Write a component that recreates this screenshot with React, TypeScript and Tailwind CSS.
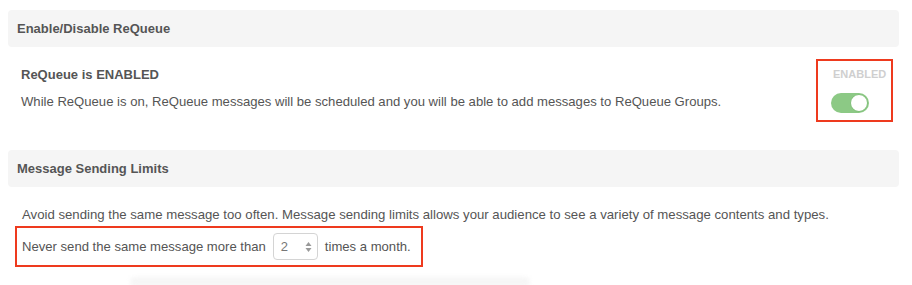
import React from "react";

function Toggle() {
  return (
    <div className="relative h-[20px] w-[38px] rounded-full bg-[#8cc985]">
      <div className="absolute right-[1px] top-[1px] h-[18px] w-[18px] rounded-full border border-[#7fbf78] bg-white" />
    </div>
  );
}

function NumberBox() {
  return (
    <div className="mx-[7px] flex h-[27px] w-[45px] items-center justify-between rounded-[4px] border border-[#d4d4d4] bg-white pl-[7px] pr-[5px] text-[13px] text-[#777]">
      <span>2</span>
      <svg width="7" height="12" viewBox="0 0 7 12">
        <path d="M3.5 1 L6.5 5 L0.5 5 Z" fill="#999" />
        <path d="M3.5 11 L6.5 7 L0.5 7 Z" fill="#999" />
      </svg>
    </div>
  );
}

export default function App() {
  return (
    <div
      className="relative h-[285px] w-[912px] overflow-hidden bg-white pl-[8px] pr-[13px] pt-[10px] text-[#555]"
      style={{ fontFamily: '"Liberation Sans", Arial, Helvetica, sans-serif' }}
    >
      <div className="flex h-[37px] items-center rounded-[4px] bg-[#f5f5f5] pl-[9px] text-[13px] font-bold text-[#555]">
        Enable/Disable ReQueue
      </div>
      <div className="mt-[12px] flex items-start justify-between pl-[13px] pr-[6px]">
        <div className="pt-[8px]">
          <div className="text-[13px] font-bold leading-[16px] text-[#555]">ReQueue is ENABLED</div>
          <div className="mt-[11px] text-[13.1px] leading-[16px] text-[#555]">
            While ReQueue is on, ReQueue messages will be scheduled and you will be able to add messages to ReQueue Groups.
          </div>
        </div>
        <div className="flex h-[63px] w-[77px] flex-col items-start border-2 border-[#ee3a1e] pl-[13px] pt-[6px]">
          <div className="ml-[2px] text-[11px] font-bold leading-[14px] text-[#cfcfcf]">ENABLED</div>
          <div className="mt-[12px]">
            <Toggle />
          </div>
        </div>
      </div>

      <div className="mt-[28px] flex h-[37px] items-center rounded-[4px] bg-[#f5f5f5] pl-[9px] text-[13px] font-bold text-[#555]">
        Message Sending Limits
      </div>
      <div className="mt-[20px] pl-[14px] text-[13.2px] leading-[16px] text-[#555]">
        Avoid sending the same message too often. Message sending limits allows your audience to see a variety of message contents and types.
      </div>
      <div className="ml-[7px] mt-[3px] flex h-[41px] w-[408px] items-center border-2 border-[#ee3a1e] pl-[5px] text-[13.1px] text-[#555]">
        <span>Never send the same message more than</span>
        <NumberBox />
        <span>times a month.</span>
      </div>
      <div className="ml-[122px] mt-[10px] h-[10px] w-[400px] rounded-full bg-[#f6f6f6] blur-[2px]" />
    </div>
  );
}
